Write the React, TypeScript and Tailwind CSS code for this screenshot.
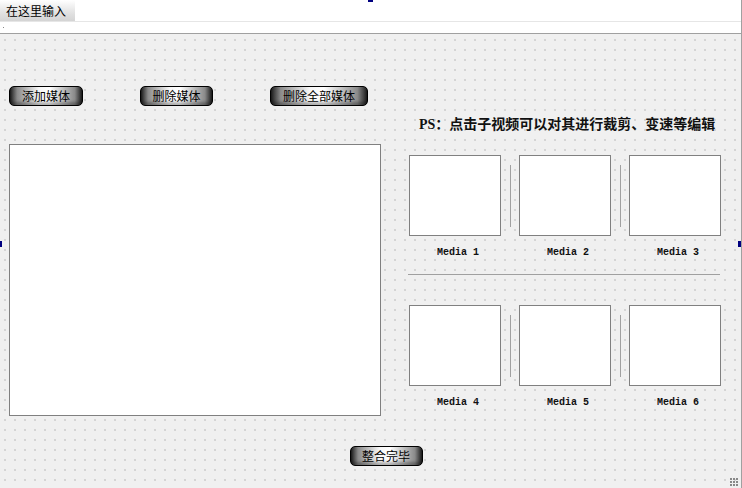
import React from 'react';

const btn =
  "h-[20px] rounded-[5px] border border-black bg-[linear-gradient(90deg,#1c1c1c,#8a8a8a_10%,#f6f6f6_40%,#ffffff_55%,#8a8a8a_90%,#1c1c1c)] text-[12px] leading-[18px] text-black flex items-center justify-center shadow-[inset_0_-3px_3px_rgba(0,0,0,0.3)]";

const MediaBox = () => (
  <div className="w-[92px] h-[81px] bg-white border border-[#808080]"></div>
);

const Sep = () => (
  <div className="w-[18px] h-[81px] flex justify-center pt-[10px]">
    <div className="w-px h-[62px] bg-[#a0a0a0]"></div>
  </div>
);

const Label = ({ text }: { text: string }) => (
  <div className="w-[92px] text-center text-[10px] font-bold leading-[12px] text-[#111] pl-[6px]" style={{ fontFamily: '"Liberation Mono", monospace' }}>
    {text}
  </div>
);

const MediaRow = ({ names }: { names: string[] }) => (
  <div className="flex flex-col">
    <div className="flex">
      <MediaBox />
      <Sep />
      <MediaBox />
      <Sep />
      <MediaBox />
    </div>
    <div className="flex gap-[18px] mt-[11px]">
      {names.map((n) => (
        <Label key={n} text={n} />
      ))}
    </div>
  </div>
);

export default function App() {
  return (
    <div
      className="relative w-[742px] h-[488px] overflow-hidden bg-[#f0f0f0] flex flex-col border-r border-[#a0a0a0]"
      style={{ fontFamily: '"Noto Sans CJK SC", sans-serif' }}
    >
      {/* menu bar */}
      <div className="h-[22px] bg-white flex border-b border-[#e6e6e6]">
        <div className="w-[75px] h-[21px] bg-[linear-gradient(180deg,#ffffff,#e2e2e2_60%,#d4d4d4)] text-[12px] leading-[21px] pl-[6px] text-black">
          在这里输入
        </div>
      </div>
      {/* toolbar strip */}
      <div className="h-[12px] bg-white border-b border-[#a0a0a0] flex items-center pl-[3px]">
        <div className="w-px h-px bg-[#888]"></div>
      </div>

      {/* form */}
      <div className="flex-1 flex flex-col px-[9px] bg-[radial-gradient(circle_at_1px_1px,#b4b4b4_0.6px,transparent_0.8px)] bg-[length:10px_10px] bg-[position:4px_5px]">
        <div className="flex mt-[52px]">
          <div className={`${btn} w-[74px]`}>添加媒体</div>
          <div className={`${btn} w-[73px] ml-[57px]`}>删除媒体</div>
          <div className={`${btn} w-[98px] ml-[57px]`}>删除全部媒体</div>
        </div>

        <div className="flex">
          <div className="w-[372px] h-[272px] mt-[38px] bg-white border border-[#808080]"></div>
          <div className="ml-[28px] flex flex-col">
            <div
              className="mt-[10px] pl-[10px] h-[17px] text-[14px] leading-[17px] font-bold text-[#111] whitespace-nowrap"
              style={{ fontFamily: '"Liberation Serif", "Noto Sans CJK SC", serif' }}
            >
              PS：点击子视频可以对其进行裁剪、变速等编辑
            </div>
            <div className="mt-[22px]">
              <MediaRow names={["Media 1", "Media 2", "Media 3"]} />
            </div>
            <div className="mt-[15px] w-[312px] h-px bg-[#a0a0a0] -ml-px"></div>
            <div className="mt-[30px]">
              <MediaRow names={["Media 4", "Media 5", "Media 6"]} />
            </div>
          </div>
        </div>

        <div className="flex justify-center mt-[30px] pr-[1px]">
          <div className={`${btn} w-[73px] ml-[32px]`}>整合完毕</div>
        </div>
      </div>

      {/* selection handles */}
      <div className="absolute left-[368px] top-0 w-[5px] h-[2px] bg-[#000080]"></div>
      <div className="absolute left-0 top-[241px] w-[2px] h-[6px] bg-[#000080]"></div>
      <div className="absolute right-0 top-[241px] w-[3px] h-[6px] bg-[#000080]"></div>
      {/* resize grip */}
      <div className="absolute right-[3px] bottom-[2px] w-[8px] h-[8px] bg-[radial-gradient(circle_at_1px_1px,#888_0.8px,transparent_0.9px)] bg-[length:3px_3px]"></div>
    </div>
  );
}
